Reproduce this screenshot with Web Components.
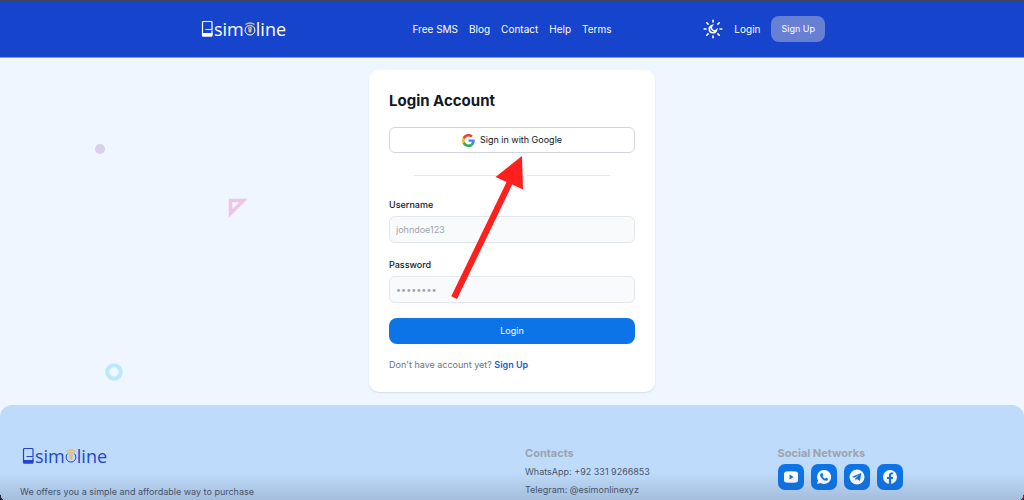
<!DOCTYPE html>
<html lang="en">
<head>
<meta charset="utf-8">
<meta name="viewport" content="width=device-width, initial-scale=1">
<title>Login - Esimoline</title>
<style>
    body {
        margin: 0;
        font: 9px/14px Inter, sans-serif;
        color: #111827;
        background: #eff6ff;
    }
</style>
</head>
<body>
<app-page>
    <site-header slot="header"></site-header>
    <login-card heading="Login Account"></login-card>
    <site-footer slot="footer"></site-footer>
</app-page>

<script>
class AppPage extends HTMLElement {
    constructor() {
        super();
        this.attachShadow({ mode: 'open' });
        this.shadowRoot.innerHTML = `
            <style>
                :host {
                    position: relative;
                    display: flex;
                    flex-direction: column;
                    height: 100vh;
                    overflow: hidden;
                }
                main {
                    position: relative;
                    display: flex;
                    justify-content: center;
                    padding: 12px 16px 13px;
                }
                .shape { position: absolute; }
                .dot { left: 95px; top: 86px; }
                .triangle { left: 228px; top: 140px; }
                .ring { left: 105px; top: 305px; }
                .shade {
                    position: absolute;
                    inset: auto 0 0;
                    height: 28px;
                    pointer-events: none;
                    background:
                        radial-gradient(ellipse 4px 9px at 100% 0, transparent 95%, #17283f) left bottom / 4px 9px no-repeat,
                        radial-gradient(ellipse 4px 9px at 0 0, transparent 95%, #70243f) right bottom / 4px 9px no-repeat,
                        linear-gradient(transparent, rgba(60, 70, 95, 0.2));
                }
            </style>
            <slot name="header"></slot>
            <main>
                <svg class="shape dot" width="10" height="10" aria-hidden="true"><circle cx="5" cy="5" r="5" fill="#d9cfed"/></svg>
                <svg class="shape triangle" width="20" height="20" aria-hidden="true"><path d="M2.500 2.500H15.500L2.500 15.500Z" fill="none" stroke="#f1c3e6" stroke-width="3.500"/></svg>
                <svg class="shape ring" width="18" height="18" aria-hidden="true"><circle cx="9" cy="9" r="6.700" fill="none" stroke="#bde7fa" stroke-width="4"/></svg>
                <slot></slot>
            </main>
            <slot name="footer"></slot>
            <div class="shade"></div>
        `;
    }
}

class BrandLogo extends HTMLElement {
    constructor() {
        super();
        this.attachShadow({ mode: 'open' });
        this.shadowRoot.innerHTML = `
            <style>
                :host { display: flex; }
                a {
                    display: flex;
                    align-items: center;
                    padding-left: 2px;
                    color: inherit;
                    text-decoration: none;
                    font: 400 18px/20px "Open Sans", sans-serif;
                }
            </style>
            <a href="#" aria-label="simoline">
                <svg width="13" height="18" viewBox="0 0 13 18" fill="none" stroke="currentColor">
                    <path d="M11 8V2.500a1 1 0 0 0-1-1H2.500a1 1 0 0 0-1 1V15M11 10.500V15M4.500 9.500H11V7" stroke-width="1.200"/>
                    <path d="M1 13h10.500v2.700a1 1 0 0 1-1 1H2a1 1 0 0 1-1-1z" fill="currentColor" stroke="none"/>
                </svg>
                <span>sim</span>
                <svg width="12" height="18" viewBox="0 0 12 18" fill="none">
                    <path d="M2.700 6.500a4.900 4.900 0 1 0 6.600 0" stroke="currentColor"/>
                    <path d="M1.500 4.500Q6 1.500 10.500 4.500M2.800 6.500Q6 4.500 9.200 6.500M4 8.500Q6 7 8 8.500" stroke="#d9bd79" stroke-width="1.300"/>
                    <path d="M4.500 9h3v2.500L6 13l-1.500-1.500z" fill="#d9bd79"/>
                </svg>
                <span>line</span>
            </a>
        `;
    }
}

class SiteHeader extends HTMLElement {
    constructor() {
        super();
        this.attachShadow({ mode: 'open' });
        this.shadowRoot.innerHTML = `
            <style>
                :host {
                    display: block;
                    flex: none;
                    color: #fff;
                    background: #1744cc;
                    border-top: 1px solid #404554;
                    border-bottom: 1px solid #7f9ae8;
                }
                .bar {
                    display: grid;
                    grid-template-columns: 1fr auto 1fr;
                    align-items: center;
                    max-width: 626px;
                    height: 56px;
                    margin: 0 auto;
                    padding: 0 16px;
                }
                nav, .actions {
                    display: flex;
                    align-items: center;
                    gap: 11px;
                    font-size: 10px;
                }
                .actions { justify-content: flex-end; }
                a { color: inherit; text-decoration: none; }
                button {
                    display: flex;
                    padding: 0;
                    border: 0;
                    background: none;
                    color: inherit;
                    cursor: pointer;
                }
                .signup {
                    padding: 6px 10px;
                    border-radius: 8px;
                    background: #6780d4;
                    font-size: 9px;
                }
            </style>
            <div class="bar">
                <brand-logo></brand-logo>
                <nav>
                    <a href="#">Free SMS</a>
                    <a href="#">Blog</a>
                    <a href="#">Contact</a>
                    <a href="#">Help</a>
                    <a href="#">Terms</a>
                </nav>
                <div class="actions">
                    <button type="button" aria-label="Toggle theme">
                        <svg width="20" height="20" viewBox="0 0 20 20" fill="none" stroke="currentColor" stroke-linecap="round">
                            <path d="M10 1.200v1.800M10 17v1.800M1.200 10H3M17 10h1.800M3.800 3.800l1.300 1.300M14.900 14.900l1.300 1.300M3.800 16.200l1.300-1.300M14.900 5.100l1.300-1.300" stroke-width="1.600"/>
                            <path d="M9 6.500a3.700 3.700 0 1 0 4.500 4.500A3.200 3.200 0 0 1 9 6.500Z" stroke-width="1.600"/>
                        </svg>
                    </button>
                    <a href="#">Login</a>
                    <a class="signup" href="#">Sign Up</a>
                </div>
            </div>
        `;
    }
}

class TextField extends HTMLElement {
    connectedCallback() {
        const label = this.getAttribute('label');
        const type = this.getAttribute('type');
        const placeholder = this.getAttribute('placeholder');
        this.attachShadow({ mode: 'open' });
        this.shadowRoot.innerHTML = `
            <style>
                :host { display: block; }
                label {
                    display: block;
                    margin-bottom: 4px;
                    font-weight: 500;
                }
                input {
                    display: block;
                    box-sizing: border-box;
                    width: 100%;
                    height: 27px;
                    padding: 0 6px;
                    border: 1px solid #e3e6eb;
                    border-radius: 6px;
                    background: #f9fafb;
                    color: inherit;
                    font: inherit;
                }
                input::placeholder { color: #9ca3af; }
            </style>
            <label for="field">${label}</label>
            <input id="field" type="${type}" placeholder="${placeholder}">
        `;
    }
}

class LoginCard extends HTMLElement {
    connectedCallback() {
        this.attachShadow({ mode: 'open' });
        this.shadowRoot.innerHTML = `
            <style>
                :host {
                    position: relative;
                    display: block;
                    box-sizing: border-box;
                    width: 100%;
                    max-width: 286px;
                    padding: 20px;
                    border-radius: 10px;
                    background: #fff;
                    box-shadow: 0 1px 2px rgba(0, 0, 0, 0.1);
                }
                h1 {
                    margin: 0 0 15px;
                    font-size: 15px;
                    line-height: 22px;
                    font-weight: 700;
                }
                button {
                    display: flex;
                    align-items: center;
                    justify-content: center;
                    gap: 5px;
                    width: 100%;
                    height: 26px;
                    padding: 0;
                    font: inherit;
                    cursor: pointer;
                }
                .google {
                    border: 1px solid #d1d5db;
                    border-radius: 6px;
                    background: #fff;
                    color: #111;
                }
                .divider {
                    display: flex;
                    gap: 30px;
                    width: 80%;
                    margin: 22px auto;
                }
                .divider span {
                    flex: 1;
                    height: 1px;
                    background: #e5e7eb;
                }
                form { display: grid; gap: 15px; }
                .submit {
                    border: 0;
                    border-radius: 8px;
                    background: #0d74e7;
                    color: #fff;
                }
                p { margin: 14px 0 0; color: #6b7280; }
                a {
                    color: #1462c4;
                    font-weight: 600;
                    text-decoration: none;
                }
                .arrow {
                    position: absolute;
                    left: 80px;
                    top: 84px;
                    pointer-events: none;
                }
            </style>
            <h1>${this.getAttribute('heading')}</h1>
            <button class="google" type="button">
                <svg width="13" height="13" viewBox="0 0 48 48" aria-hidden="true">
                    <path fill="#ea4335" d="M24 9.500c3.540 0 6.710 1.220 9.210 3.600l6.850-6.850C35.900 2.380 30.470 0 24 0 14.620 0 6.510 5.380 2.560 13.220l7.980 6.190C12.430 13.720 17.740 9.500 24 9.500z"/>
                    <path fill="#4285f4" d="M46.980 24.550c0-1.570-.15-3.090-.38-4.550H24v9.020h12.940c-.58 2.960-2.260 5.480-4.780 7.180l7.730 6c4.510-4.180 7.090-10.360 7.090-17.650z"/>
                    <path fill="#fbbc05" d="M10.530 28.590c-.48-1.450-.76-2.990-.76-4.590s.27-3.140.76-4.590l-7.980-6.190C.92 16.460 0 20.120 0 24s.92 7.540 2.560 10.780z"/>
                    <path fill="#34a853" d="M24 48c6.480 0 11.930-2.130 15.890-5.810l-7.730-6c-2.150 1.450-4.920 2.300-8.160 2.300-6.260 0-11.570-4.220-13.470-9.910l-7.980 6.190C6.510 42.620 14.620 48 24 48z"/>
                </svg>
                Sign in with Google
            </button>
            <div class="divider"><span></span><span></span></div>
            <form>
                <text-field label="Username" type="text" placeholder="johndoe123"></text-field>
                <text-field label="Password" type="password" placeholder="••••••••"></text-field>
                <button class="submit" type="button">Login</button>
            </form>
            <p>Don't have account yet? <a href="#">Sign Up</a></p>
            <svg class="arrow" width="78" height="148" aria-hidden="true">
                <path d="M73 2L46.500 23L57.600 28L2.300 142.300L8 145L63.200 30.600L74 35.500Z" fill="#ff1f1c"/>
            </svg>
        `;
    }
}

const socialIcons = {
    YouTube: '<path fill="currentColor" fill-rule="evenodd" d="M3.500 2.500Q8 1.800 12.500 2.500Q15 2.500 15 5V11Q15 13.500 12.500 13.500Q8 14.200 3.500 13.500Q1 13.500 1 11V5Q1 2.500 3.500 2.500ZM6.500 5.500V10.500L10.700 8Z"/>',
    WhatsApp: '<path fill="currentColor" d="M1 15L2 11.400A7 7 0 1 1 4.600 14Z"/><path fill="#0d74e7" d="M5.300 4.300h1.200l.8 2-.8 1c.6 1.200 1.400 1.900 2.600 2.500l1-1 1.900 1c.1 1.300-.8 2-1.800 2C7.300 11.700 4.200 8.300 4.200 6c0-.8.500-1.300 1.100-1.700Z"/>',
    Telegram: '<circle cx="8" cy="8" r="7.500" fill="currentColor"/><path fill="#0d74e7" d="M3 7.700L12.300 4.100L10.900 12L7.900 10L6.500 11.400L6.300 9.200L10.300 5.700L5.300 8.800Z"/>',
    Facebook: '<circle cx="8" cy="8" r="7" fill="currentColor"/><path fill="#0d74e7" d="M6.900 15V9.900H5V7.900h1.900V6.200C6.900 4.300 8 3.400 9.700 3.400l1.500.1v1.700h-.9c-.9 0-1.200.4-1.200 1.200v1.500h2l-.3 2H9.100V15Z"/>'
};

class SocialLink extends HTMLElement {
    connectedCallback() {
        const name = this.getAttribute('name');
        this.attachShadow({ mode: 'open' });
        this.shadowRoot.innerHTML = `
            <style>
                :host { display: block; }
                a {
                    display: flex;
                    align-items: center;
                    justify-content: center;
                    width: 26px;
                    height: 26px;
                    border-radius: 7px;
                    background: #0d74e7;
                    color: #fff;
                }
            </style>
            <a href="#" aria-label="${name}"><svg width="16" height="16" viewBox="0 0 16 16">${socialIcons[name]}</svg></a>
        `;
    }
}

class SiteFooter extends HTMLElement {
    constructor() {
        super();
        this.attachShadow({ mode: 'open' });
        this.shadowRoot.innerHTML = `
            <style>
                :host {
                    display: grid;
                    grid-template-columns: repeat(4, 1fr);
                    gap: 26px;
                    flex: 1;
                    padding: 41px 20px 0;
                    border-radius: 12px 12px 0 0;
                    background: #bfdbfb;
                    color: #475569;
                }
                .about { grid-column: span 2; }
                brand-logo { color: #1f45d3; }
                p { margin: 0; }
                .about p { margin-top: 19px; }
                h2 {
                    margin: 0 0 4px;
                    color: #9ca3af;
                    font-size: 11px;
                    line-height: 14px;
                    font-weight: 700;
                }
                .contacts { display: grid; align-content: start; gap: 4px; }
                .contacts h2 { margin-bottom: 1px; }
                .social { display: flex; gap: 7px; }
            </style>
            <div class="about">
                <brand-logo></brand-logo>
                <p>We offers you a simple and affordable way to purchase</p>
            </div>
            <div class="contacts">
                <h2>Contacts</h2>
                <p>WhatsApp: +92 331 9266853</p>
                <p>Telegram: @esimonlinexyz</p>
            </div>
            <div>
                <h2>Social Networks</h2>
                <div class="social">
                    <social-link name="YouTube"></social-link>
                    <social-link name="WhatsApp"></social-link>
                    <social-link name="Telegram"></social-link>
                    <social-link name="Facebook"></social-link>
                </div>
            </div>
        `;
    }
}

customElements.define('brand-logo', BrandLogo);
customElements.define('text-field', TextField);
customElements.define('social-link', SocialLink);
customElements.define('site-header', SiteHeader);
customElements.define('login-card', LoginCard);
customElements.define('site-footer', SiteFooter);
customElements.define('app-page', AppPage);
</script>
</body>
</html>
